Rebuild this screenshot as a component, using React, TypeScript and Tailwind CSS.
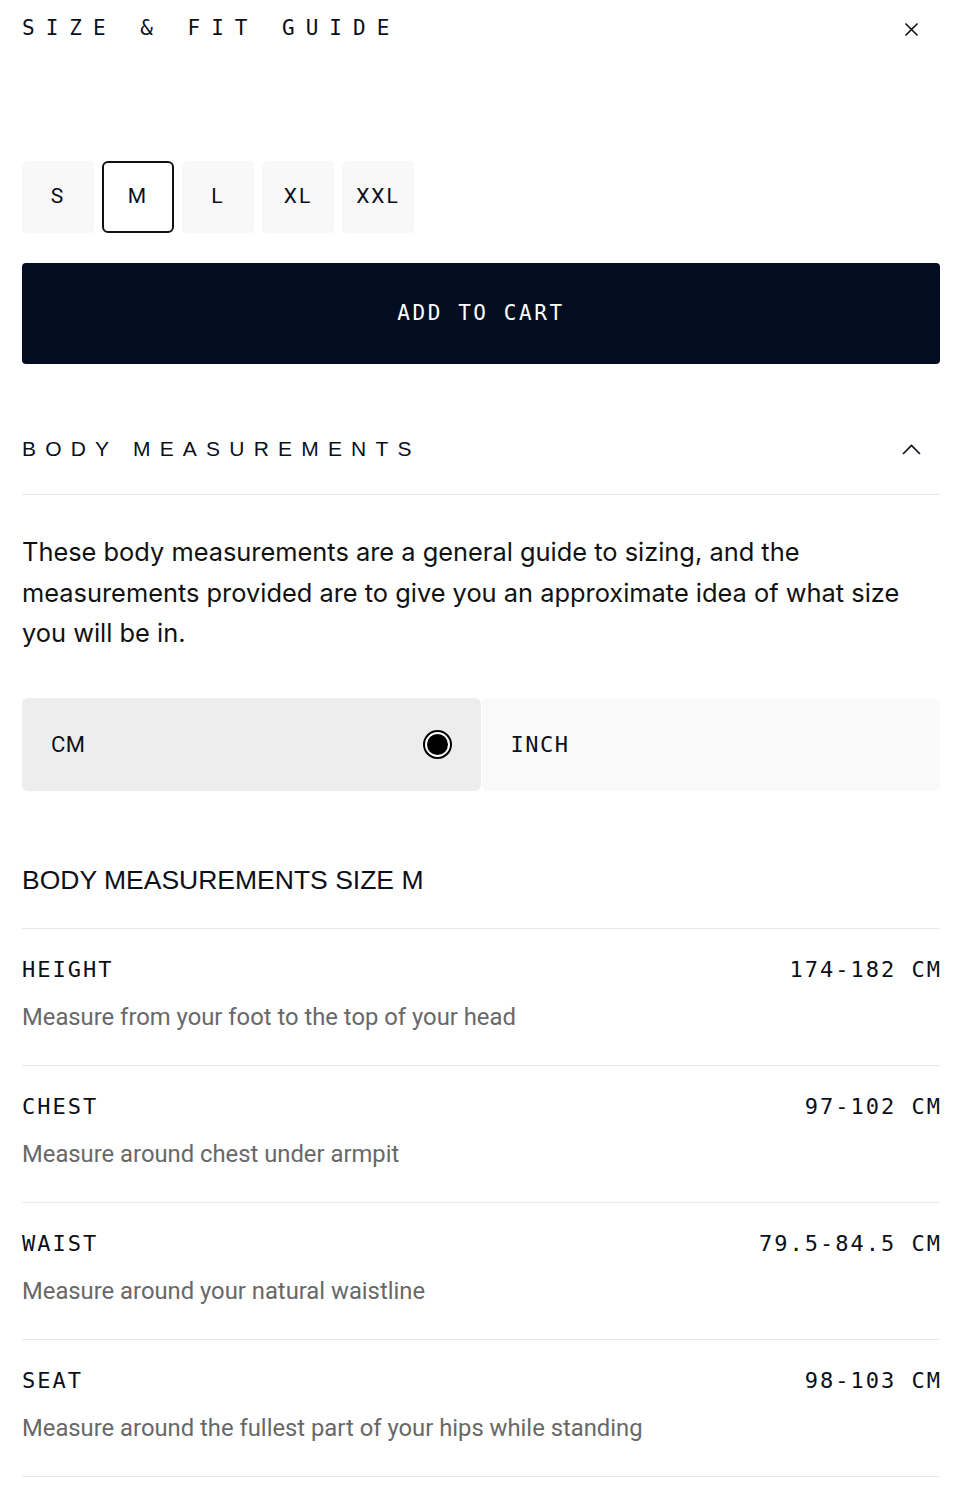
import { useState } from 'react';

const mono = { fontFamily: '"DejaVu Sans Mono", "Liberation Mono", monospace' };
const sans = { fontFamily: '"Liberation Sans", Arial, sans-serif' };

const sizes = ['S', 'M', 'L', 'XL', 'XXL'];

const rows = [
  { label: 'HEIGHT', value: '174-182 CM', desc: 'Measure from your foot to the top of your head' },
  { label: 'CHEST', value: '97-102 CM', desc: 'Measure around chest under armpit' },
  { label: 'WAIST', value: '79.5-84.5 CM', desc: 'Measure around your natural waistline' },
  { label: 'SEAT', value: '98-103 CM', desc: 'Measure around the fullest part of your hips while standing' },
];

export default function App() {
  const [size, setSize] = useState('M');
  const [unit, setUnit] = useState('CM');

  return (
    <div className="min-h-screen bg-white text-[#0b0f1a] pl-[22px] pr-[20px]" style={{ fontFamily: 'Inter, "Noto Sans", sans-serif' }}>
      {/* Header */}
      <div className="flex h-[58px] items-center justify-between">
        <h1 className="text-[21px] tracking-[11px] font-normal" style={mono}>
          SIZE &amp; FIT GUIDE
        </h1>
        <button className="mr-[21px] text-[#0b0f1a]">
          <svg width="15" height="15" viewBox="0 0 15 15" fill="none" stroke="currentColor" strokeWidth="1.6">
            <path d="M1.5 1.5l12 12M13.5 1.5l-12 12" />
          </svg>
        </button>
      </div>

      {/* Sizes */}
      <div className="mt-[103px] flex gap-[8px]">
        {sizes.map((s) => (
          <button
            key={s}
            onClick={() => setSize(s)}
            className={`flex h-[72px] w-[72px] items-center justify-center text-[21px] tracking-[2px] ${
              s === size ? 'rounded-[6px] border-2 border-[#111] bg-white' : 'rounded-[4px] bg-[#f8f8f8]'
            }`}
            style={{ fontFamily: 'Roboto, "Liberation Sans", sans-serif' }}
          >
            {s}
          </button>
        ))}
      </div>

      <button
        className="mt-[30px] flex h-[101px] w-full items-center justify-center rounded-[4px] bg-[#020d21] text-[21px] tracking-[2.6px] text-white"
        style={mono}
      >
        ADD TO CART
      </button>

      {/* Body measurements accordion */}
      <div className="mt-[40px] flex h-[91px] items-center justify-between border-b border-[#e8e8e8]">
        <h2 className="text-[21px] tracking-[9.2px]" style={sans}>
          BODY MEASUREMENTS
        </h2>
        <svg className="mr-[19px]" width="19" height="11" viewBox="0 0 19 11" fill="none" stroke="currentColor" strokeWidth="1.6">
          <path d="M1 10l8.5-8.5L18 10" />
        </svg>
      </div>

      <p className="mt-[37px] text-[25.4px] leading-[40.5px] text-[#111]">
        These body measurements are a general guide to sizing, and the measurements provided are to give you an
        approximate idea of what size you will be in.
      </p>

      {/* Unit toggle */}
      <div className="mt-[44px] grid grid-cols-2 gap-[1px]">
        <button
          onClick={() => setUnit('CM')}
          className={`flex h-[93px] items-center justify-between rounded-[6px] px-[29px] ${
            unit === 'CM' ? 'bg-[#ededed]' : 'bg-[#f9f9f9]'
          }`}
        >
          <span className="text-[22px] tracking-[0.5px]" style={{ fontFamily: 'Roboto, sans-serif' }}>
            CM
          </span>
          {unit === 'CM' && (
            <span className="flex h-[29px] w-[29px] items-center justify-center rounded-full border-2 border-black bg-white">
              <span className="h-[21px] w-[21px] rounded-full bg-black" />
            </span>
          )}
        </button>
        <button
          onClick={() => setUnit('INCH')}
          className={`flex h-[93px] items-center justify-between rounded-[6px] px-[29px] ${
            unit === 'INCH' ? 'bg-[#ededed]' : 'bg-[#f9f9f9]'
          }`}
        >
          <span className="text-[22px] tracking-[1.5px]" style={mono}>
            INCH
          </span>
        </button>
      </div>

      {/* Table */}
      <h3 className="mt-[69px] pb-[28px] text-[26.5px] leading-[40px] border-b border-[#e8e8e8]" style={sans}>
        BODY MEASUREMENTS SIZE M
      </h3>
      {rows.map((r) => (
        <div key={r.label} className="border-b border-[#e8e8e8] pt-[26px] pb-[33px]">
          <div className="flex items-center justify-between text-[22px] leading-[30px] tracking-[2px]" style={mono}>
            <span>{r.label}</span>
            <span className="mr-[-2px]">{r.value}</span>
          </div>
          <div className="mt-[17px] text-[23.8px] leading-[30px] text-[#686868]" style={{ fontFamily: 'Roboto, sans-serif' }}>
            {r.desc}
          </div>
        </div>
      ))}
    </div>
  );
}
